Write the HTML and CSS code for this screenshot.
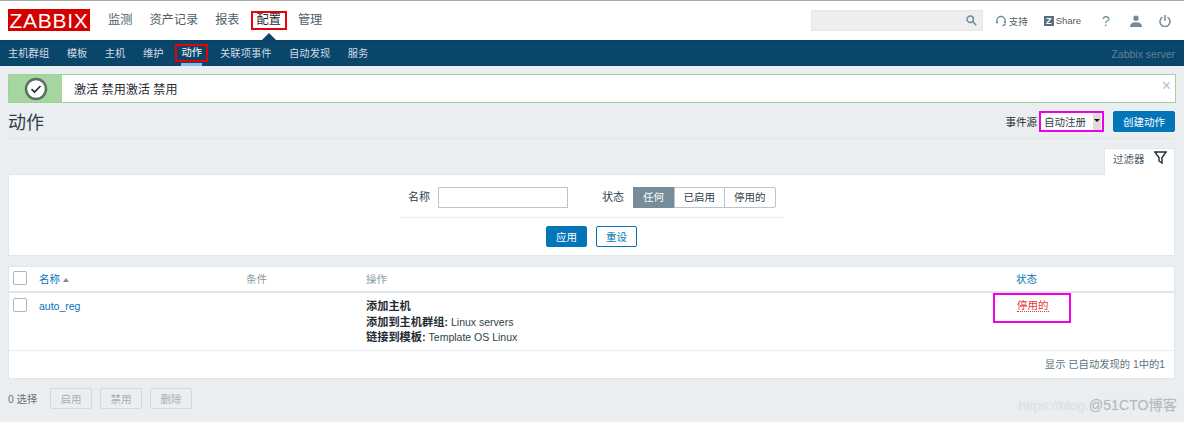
FILE: index.html
```html
<!DOCTYPE html>
<html lang="zh-CN">
<head>
    <meta charset="UTF-8">
    <title>动作 - Zabbix</title>
    <link rel="stylesheet" href="styles.css">
</head>
<body>
    <header class="top-bar">
        <div class="logo">ZABBIX</div>
        <nav class="main-nav">
            <a>监测</a>
            <a>资产记录</a>
            <a>报表</a>
            <a class="marked">配置</a>
            <a>管理</a>
        </nav>
        <div class="top-tools">
            <div class="search">
                <svg width="11" height="11" viewBox="0 0 13 13" fill="none" stroke="#768d99" stroke-width="1.8"><circle cx="5" cy="5" r="3.8"/><path d="M8 8l4.2 4.2"/></svg>
            </div>
            <a class="tool tool-support">
                <svg width="10" height="12" viewBox="0 0 11 12" fill="none" stroke="#768d99" stroke-width="1.5"><path d="M1 8V5.500a4.500 4.500 0 0 1 9 0V8"/><path d="M1 6.500v2M10 6.500v2" stroke-width="2.500"/><path d="M10 9c0 1.500-1.500 2-3 2"/></svg>
                支持
            </a>
            <a class="tool tool-share"><span class="z-icon">Z</span>Share</a>
            <a class="tool tool-icon tool-help">?</a>
            <a class="tool tool-icon tool-user">
                <svg width="12" height="12" viewBox="0 0 12 12" fill="#768d99"><circle cx="6" cy="3.200" r="2.700"/><path d="M0 12c0-3.500 2.500-4.800 6-4.800s6 1.300 6 4.800z"/></svg>
            </a>
            <a class="tool tool-icon">
                <svg width="12" height="13" viewBox="0 0 12 13" fill="none" stroke="#768d99" stroke-width="1.5"><path d="M3.500 3.200a5 5 0 1 0 5 0"/><path d="M6 1v6"/></svg>
            </a>
        </div>
    </header>

    <div class="sub-bar">
        <nav class="sub-nav">
            <a>主机群组</a>
            <a>模板</a>
            <a>主机</a>
            <a>维护</a>
            <a class="current">动作</a>
            <a>关联项事件</a>
            <a>自动发现</a>
            <a>服务</a>
        </nav>
        <span class="server-name">Zabbix server</span>
    </div>

    <main class="content">
        <div class="msg-good">
            <div class="msg-icon">
                <svg width="24" height="24" viewBox="0 0 24 24"><circle cx="12" cy="12" r="10" fill="#fff" stroke="#5c6f66" stroke-width="2.500"/><path d="M7.500 12.200l3 2.800 6-6" fill="none" stroke="#1f2c33" stroke-width="1.700"/></svg>
            </div>
            <div class="msg-text">激活 禁用激活 禁用</div>
            <span class="msg-close">×</span>
        </div>

        <div class="page-head">
            <h1>动作</h1>
            <div class="head-controls">
                <label class="source-label">事件源</label>
                <div class="source-select">
                    <span>自动注册</span>
                    <i class="select-arrow"></i>
                </div>
                <button class="btn">创建动作</button>
            </div>
        </div>

        <div class="filter-tabs">
            <div class="filter-tab">
                过滤器
                <svg width="13" height="13" viewBox="0 0 13 13" fill="none" stroke="#1f2c33" stroke-width="1.400"><path d="M.8 1h11.400L8 6.500V12L5 10V6.500z"/></svg>
            </div>
        </div>
        <section class="filter-panel">
            <div class="filter-row">
                <label>名称</label>
                <input class="text-input" type="text">
                <label class="status-label">状态</label>
                <div class="segments">
                    <span class="on">任何</span>
                    <span>已启用</span>
                    <span class="last">停用的</span>
                </div>
            </div>
            <div class="filter-buttons">
                <button class="btn">应用</button>
                <button class="btn btn-alt">重设</button>
            </div>
        </section>

        <section class="list-panel">
            <table class="list">
                <thead>
                    <tr>
                        <th class="col-check"><span class="check"></span></th>
                        <th class="col-name"><a>名称</a><i class="sort-up"></i></th>
                        <th class="col-cond">条件</th>
                        <th class="col-ops">操作</th>
                        <th class="col-status"><a>状态</a></th>
                    </tr>
                </thead>
                <tbody>
                    <tr>
                        <td class="col-check"><span class="check"></span></td>
                        <td class="col-name"><a>auto_reg</a></td>
                        <td></td>
                        <td class="ops">
                            <b>添加主机</b><br>
                            <b>添加到主机群组:</b> Linux servers<br>
                            <b>链接到模板:</b> Template OS Linux
                        </td>
                        <td class="col-status">
                            <a class="disabled-link">停用的</a>
                            <span class="status-mark"></span>
                        </td>
                    </tr>
                </tbody>
            </table>
            <div class="list-foot">显示 已自动发现的 1中的1</div>
        </section>

        <div class="action-bar">
            <span class="selected-count">0 选择</span>
            <button class="btn-off">启用</button>
            <button class="btn-off">禁用</button>
            <button class="btn-off">删除</button>
        </div>
    </main>

    <div class="watermark">https://blog.<b>@51CTO博客</b></div>
</body>
</html>
```

FILE: styles.css
```css
* {
    margin: 0;
    padding: 0;
    box-sizing: border-box;
}

body {
    font-family: "Liberation Sans", "Noto Sans CJK SC", sans-serif;
    font-size: 11px;
    color: #1f2c33;
    background: #ebeef0;
    height: 422px;
    overflow: hidden;
    position: relative;
}

/* top bar */
.top-bar {
    height: 40px;
    background: #fff;
    border-top: 1px solid #a8a8a4;
    display: flex;
    align-items: center;
    padding: 0 8px;
}

.logo {
    width: 82px;
    height: 22px;
    margin-top: -2px;
    background: #d40000;
    color: #fff;
    font-size: 21px;
    line-height: 23px;
    letter-spacing: 0.7px;
    text-align: center;
}

.main-nav {
    display: flex;
    align-items: center;
    margin-left: 18px;
    position: relative;
}

.main-nav a {
    color: #4f5f68;
    font-size: 12.200px;
    margin-right: 17px;
    line-height: 15px;
}

.main-nav a.marked {
    color: #1f2c33;
    outline: 2px solid #e8000b;
    padding: 0 4px;
    margin: 0 13px 0 -4px;
    position: relative;
}

.main-nav a.marked::after {
    content: "";
    position: absolute;
    left: 9px;
    top: 20px;
    border: 7px solid transparent;
    border-top: 0;
    border-bottom-color: #0a466a;
}

.top-tools {
    margin-left: auto;
    display: flex;
    align-items: center;
    margin-right: -4px;
}

.search {
    width: 172px;
    height: 21px;
    background: #eeeeee;
    border: 1px solid #e6e6e6;
    display: flex;
    align-items: center;
    justify-content: flex-end;
    padding-right: 5px;
}

.tool {
    display: flex;
    align-items: center;
    color: #4f5f68;
    font-size: 9.500px;
}

.tool-support {
    margin-left: 13px;
    gap: 3px;
}

.tool-share {
    margin-left: 16px;
}

.z-icon {
    width: 10px;
    height: 10px;
    background: #59707e;
    color: #fff;
    font-size: 9px;
    font-weight: bold;
    line-height: 10px;
    text-align: center;
    margin-right: 2px;
}

.tool-icon {
    width: 30px;
    justify-content: center;
}

.tool-user {
    width: 29px;
}

.tool-help {
    margin-left: 10px;
    font-size: 14px;
    color: #768d99;
}

/* second bar */
.sub-bar {
    height: 26px;
    background: #0a466a;
    border-top: 1px solid #0a3f5f;
    display: flex;
    align-items: center;
    justify-content: space-between;
    padding: 0 8px;
}

.sub-nav {
    display: flex;
    align-items: center;
}

.sub-nav a {
    color: #d0dde5;
    font-size: 10.300px;
    margin-right: 17.500px;
    line-height: 14px;
}

.sub-nav a.current {
    color: #fff;
    outline: 2px solid #e8000b;
    padding: 0 4px;
    margin: 0 14px 0 -3.500px;
    position: relative;
    top: -1px;
}

.sub-nav a.current::after {
    content: "";
    position: absolute;
    left: 4px;
    right: 4px;
    top: 17px;
    height: 3px;
    background: #7fc0ea;
}

.server-name {
    color: #5f8298;
    font-size: 10.500px;
    margin-right: 1px;
}

/* page content */
.content {
    padding: 8px 9px 0 8px;
}

.msg-good {
    height: 29px;
    border: 1px solid #9fd29f;
    background: #fff;
    display: flex;
    align-items: center;
    position: relative;
    margin-right: -1px;
}

.msg-icon {
    width: 53px;
    height: 100%;
    background: #a5d6a0;
    display: flex;
    align-items: center;
    justify-content: center;
}

.msg-text {
    margin-left: 12px;
    font-size: 12.100px;
}

.msg-close {
    position: absolute;
    right: 4px;
    top: 3px;
    color: #b6c4cc;
    font-size: 16px;
    line-height: 16px;
}

.page-head {
    height: 36px;
    border-bottom: 1px solid #e2e6e9;
    display: flex;
    align-items: center;
    justify-content: space-between;
}

.page-head h1 {
    font-size: 18px;
    font-weight: normal;
    color: #2f3f48;
    line-height: 24px;
    margin-top: 5px;
}

.head-controls {
    display: flex;
    align-items: center;
    margin-top: 2px;
}

.source-label {
    margin-right: 2px;
    font-size: 10.500px;
}

.source-select {
    width: 65px;
    height: 21px;
    background: #fff;
    outline: 2px solid #f000e8;
    outline-offset: -2px;
    display: flex;
    align-items: center;
    justify-content: space-between;
    padding: 0 3px 0 5px;
    font-size: 10.500px;
    color: #2f3f48;
}

.select-arrow {
    width: 8px;
    height: 17px;
    background: #dcdcdc;
    position: relative;
}

.select-arrow::after {
    content: "";
    position: absolute;
    left: 1px;
    top: 6px;
    border: 3px solid transparent;
    border-bottom: 0;
    border-top-color: #111;
}

.btn {
    height: 21px;
    padding: 0 10px;
    background: #0275b8;
    border: 1px solid #0275b8;
    border-radius: 2px;
    color: #fff;
    font: 10.500px "Liberation Sans", "Noto Sans CJK SC", sans-serif;
}

.head-controls .btn {
    width: 62px;
    margin-left: 9px;
    padding: 0;
}

.btn-alt {
    background: #fff;
    color: #0275b8;
}

/* filter */
.filter-tabs {
    margin-top: 9px;
    height: 27px;
    display: flex;
    justify-content: flex-end;
}

.filter-tab {
    width: 71px;
    height: 27px;
    background: #fff;
    border: 1px solid #e2e6e9;
    border-bottom: 0;
    display: flex;
    align-items: center;
    padding: 0 0 7px 8px;
    gap: 9px;
    font-size: 10.500px;
    color: #4f5f68;
    position: relative;
    z-index: 1;
}

.filter-tab svg {
    margin-top: -3px;
}

.filter-panel {
    height: 82px;
    margin-top: -1px;
    background: #fff;
    border: 1px solid #e2e6e9;
    padding-top: 12px;
}

.filter-row {
    width: 384px;
    margin-left: 391px;
    height: 31px;
    border-bottom: 1px solid #ebeef0;
    display: flex;
    align-items: flex-start;
    padding-left: 8px;
}

.filter-row label {
    line-height: 21px;
    color: #2f3f48;
}

.text-input {
    width: 130px;
    height: 21px;
    margin-left: 8px;
    border: 1px solid #b8c6ce;
    background: #fff;
}

.status-label {
    margin-left: 34px;
}

.segments {
    display: flex;
    margin-left: 9px;
    height: 21px;
    border: 1px solid #b8c6ce;
    border-radius: 2px;
    line-height: 19px;
    font-size: 10.500px;
    color: #2f3f48;
}

.segments span {
    padding: 0 8.500px;
    border-left: 1px solid #b8c6ce;
}

.segments span:first-child {
    border-left: 0;
}

.segments .last {
    padding: 0 9.500px;
}

.segments .on {
    background: #768d99;
    color: #fff;
    margin: -1px 0 -1px -1px;
    line-height: 21px;
    padding: 0 10px;
}

.filter-buttons {
    display: flex;
    justify-content: center;
    gap: 9px;
    margin-top: 8px;
}

.filter-buttons .btn {
    width: 41px;
    padding: 0;
}

/* table */
.list-panel {
    margin-top: 10px;
    height: 113px;
    background: #fff;
    border: 1px solid #e2e6e9;
}

.list {
    width: 100%;
    border-collapse: collapse;
    table-layout: fixed;
}

.list th {
    height: 25px;
    padding-bottom: 2px;
    text-align: left;
    font-weight: normal;
    color: #8a9aa3;
    font-size: 10.500px;
    border-bottom: 2px solid #e2e6e9;
    vertical-align: middle;
}

.list td {
    height: 58px;
    vertical-align: top;
    border-bottom: 1px solid #ebeef0;
    padding-top: 5px;
}

.list a {
    color: #0275b8;
    font-size: 10.500px;
}

.col-check {
    width: 30px;
    padding-left: 4px;
}

.col-name {
    width: 207px;
}

.col-cond {
    width: 120px;
}

.col-ops {
    width: 627px;
}

.col-status {
    position: relative;
}

.list th.col-status {
    padding-left: 23px;
}

.list td.col-name {
    padding-top: 7px;
}

.list td.col-status {
    padding-left: 24px;
    padding-top: 4px;
}

.check {
    display: block;
    width: 14px;
    height: 14px;
    background: #fff;
    border: 1px solid #a9b9c2;
    border-radius: 2px;
}

.sort-up {
    display: inline-block;
    margin-left: 3px;
    vertical-align: 1px;
    border: 3.500px solid transparent;
    border-top: 0;
    border-bottom: 4px solid #768d99;
}

.list td.ops {
    font-size: 10.500px;
    line-height: 15.500px;
    padding-top: 6px;
    color: #2f3f48;
}

.list td.ops b {
    color: #1f2c33;
    font-size: 11.200px;
}

.list a.disabled-link {
    color: #e33734;
    border-bottom: 1px dotted #e33734;
}

/* annotation box in the picture */
.status-mark {
    position: absolute;
    left: 0;
    top: 0;
    width: 78px;
    height: 30px;
    border: 2px solid #f000e8;
}

.list-foot {
    height: 28px;
    line-height: 27px;
    text-align: right;
    padding-right: 9px;
    color: #5d7280;
    font-size: 10.300px;
}

.action-bar {
    display: flex;
    align-items: center;
    margin-top: 9px;
    height: 21px;
}

.selected-count {
    color: #5d7280;
    font-size: 10.300px;
    width: 42px;
}

.btn-off {
    width: 42px;
    height: 21px;
    margin-right: 8px;
    background: #ebeef0;
    border: 1px solid #d3dade;
    border-radius: 2px;
    color: #a3b0b8;
    font: 10.500px "Liberation Sans", "Noto Sans CJK SC", sans-serif;
}

.watermark {
    position: absolute;
    right: 7px;
    bottom: 8px;
    color: #dfe3e6;
    font-size: 13.600px;
    text-shadow: 0 0 1px #d8dcdf;
}

.watermark b {
    color: #b4b9bc;
    font-weight: normal;
    font-size: 14.200px;
}
```
